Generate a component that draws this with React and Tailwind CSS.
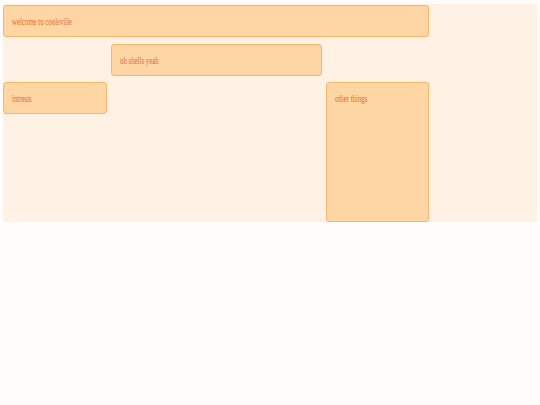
const serif = { fontFamily: '"Liberation Serif", "Times New Roman", serif' }

function Box({ label, className = '' }) {
  return (
    <div
      className={`rounded-[3px] border border-[#f8b56e] bg-[#fed6a4] px-2 py-[7px] text-[11px] leading-4 text-[#df6a30] ${className}`}
      style={serif}
    >
      <span className="inline-block origin-left scale-x-[0.62] whitespace-nowrap">{label}</span>
    </div>
  )
}

export default function App() {
  return (
    <div className="min-h-screen bg-[#fffdfc] pt-1">
      <div className="mx-[3px] grid h-[218px] grid-cols-5 grid-rows-[32px_32px_1fr] gap-x-1 gap-y-[6.5px] bg-[#fff2e4] pt-px">
        <Box label="welcome to coolsville" className="col-span-4 col-start-1 row-start-1" />
        <Box label="oh shells yeah" className="col-span-2 col-start-2 row-start-2" />
        <Box label="intrests" className="col-start-1 row-start-3 h-8 self-start" />
        <Box label="other things" className="col-start-4 row-start-3" />
      </div>
    </div>
  )
}
